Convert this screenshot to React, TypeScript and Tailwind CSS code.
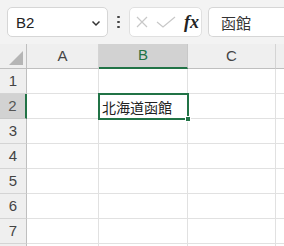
import React from "react";

const cols = [
  { label: "A", w: 72 },
  { label: "B", w: 89 },
  { label: "C", w: 88 },
  { label: "", w: 20 },
];
const rows = [1, 2, 3, 4, 5, 6, 7, 8];

export default function App() {
  return (
    <div className="w-[284px] h-[246px] overflow-hidden bg-white relative" style={{ fontFamily: '"Liberation Sans", "Noto Sans CJK JP", sans-serif' }}>
      {/* toolbar */}
      <div className="h-[44px] bg-[#f3f3f3] flex items-start pt-[7px]">
        <div className="ml-[7px] w-[101px] h-[30px] bg-white border border-[#d6d6d6] rounded-[5px] flex items-center pl-[8px] pr-[5px]">
          <span className="text-[15px] text-[#222] flex-1 leading-none">B2</span>
          <svg width="12" height="12" viewBox="0 0 12 12" className="mt-[1px]">
            <path d="M2.5 4.5 L6 8 L9.5 4.5" fill="none" stroke="#333" strokeWidth="1.5" />
          </svg>
        </div>
        <div className="w-[21px] h-[30px] flex flex-col items-center justify-center gap-[2.5px]">
          <div className="w-[2.5px] h-[2.5px] bg-[#444] rounded-full" />
          <div className="w-[2.5px] h-[2.5px] bg-[#444] rounded-full" />
          <div className="w-[2.5px] h-[2.5px] bg-[#444] rounded-full" />
        </div>
        <div className="w-[73px] h-[30px] bg-white border border-[#e0e0e0] rounded-[5px] flex items-center pl-[5px]">
          <svg width="14" height="14" viewBox="0 0 14 14">
            <path d="M2 2 L12 12 M12 2 L2 12" stroke="#c8c8c8" strokeWidth="1.2" fill="none" />
          </svg>
          <svg width="22" height="14" viewBox="0 0 22 14" className="ml-[6px]">
            <path d="M2 7 L8 12 L20 2" stroke="#c8c8c8" strokeWidth="1.2" fill="none" />
          </svg>
          <span className="ml-[7px] text-[18px] text-[#222] italic font-semibold leading-none" style={{ fontFamily: '"Liberation Serif", serif' }}>
            fx
          </span>
        </div>
        <div className="ml-[6px] flex-1 h-[30px] bg-white border border-[#d6d6d6] border-r-0 rounded-l-[5px] flex items-center pl-[12px]">
          <span className="text-[15px] text-[#333] leading-none" style={{ fontFamily: '"Noto Sans CJK JP", sans-serif' }}>函館</span>
        </div>
      </div>
      {/* grid */}
      <div className="flex">
        <div className="w-[27px] h-[25px] bg-[#efefef] border-r border-[#bfbfbf] border-b border-b-[#bfbfbf] relative shrink-0">
          <svg width="14" height="14" viewBox="0 0 14 14" className="absolute right-[3px] bottom-[3px]">
            <path d="M14 0 L14 14 L0 14 Z" fill="#b5b5b5" />
          </svg>
        </div>
        {cols.map((c) => (
          <div
            key={c.label + c.w}
            style={{ width: c.w }}
            className={
              c.label === "B"
                ? "h-[25px] shrink-0 bg-[#d2d2d2] border-r border-[#c8c8c8] border-b-2 border-b-[#217346] flex items-center justify-center text-[15px] text-[#217346]"
                : "h-[25px] shrink-0 bg-[#efefef] border-r border-[#d4d4d4] border-b border-b-[#bfbfbf] flex items-center justify-center text-[15px] text-[#444]"
            }
          >
            {c.label}
          </div>
        ))}
      </div>
      {rows.map((r) => (
        <div key={r} className="flex">
          <div
            className={
              r === 2
                ? "w-[27px] h-[25px] shrink-0 bg-[#d2d2d2] border-r-2 border-[#217346] border-b border-b-[#c8c8c8] flex items-center justify-center text-[15px] text-[#555]"
                : "w-[27px] h-[25px] shrink-0 bg-[#efefef] border-r border-[#bfbfbf] border-b border-b-[#d4d4d4] flex items-center justify-center text-[15px] text-[#444]"
            }
          >
            {r < 8 ? r : ""}
          </div>
          {cols.map((c) => (
            <div
              key={c.label + c.w}
              style={{ width: c.w }}
              className="h-[25px] shrink-0 border-r border-b border-[#e1e1e1]"
            />
          ))}
        </div>
      ))}
      {/* active cell */}
      <div className="absolute left-[98px] top-[93px] w-[91px] h-[27px] border-2 border-[#217346] flex items-center pl-[2px]">
        <span className="text-[14px] text-[#222] leading-none" style={{ fontFamily: '"Noto Sans CJK JP", sans-serif' }}>北海道函館</span>
        <div className="absolute right-[-4px] bottom-[-4px] w-[6px] h-[6px] bg-[#217346] border border-white" />
      </div>
    </div>
  );
}
